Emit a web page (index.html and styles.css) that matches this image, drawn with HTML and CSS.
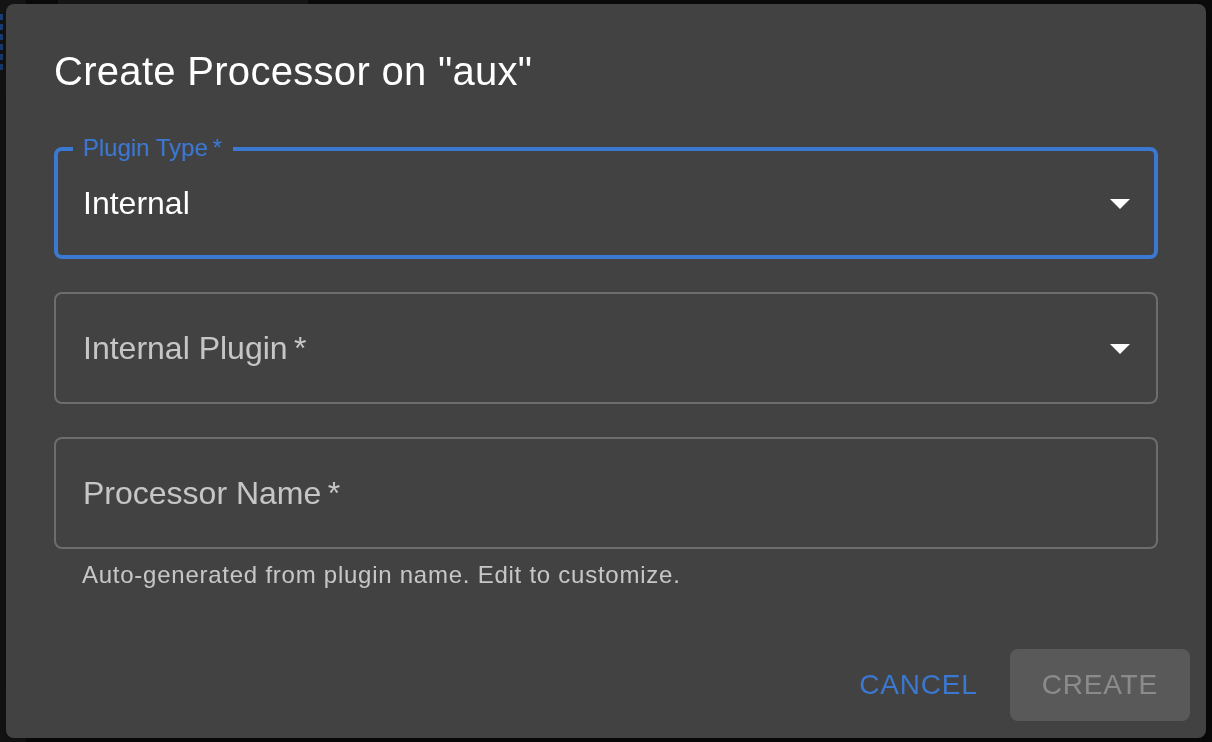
FILE: index.html
```html
<!DOCTYPE html>
<html lang="en">
<head>
<meta charset="utf-8">
<title>Create Processor</title>
<link rel="stylesheet" href="styles.css">
</head>
<body>
<div class="app">
  <div class="sidebar"><div class="dashes"></div></div>
  <div class="gutter"></div>
  <div class="main"><div class="topbar"></div></div>
</div>

<div class="dialog" role="dialog" aria-labelledby="dlg-title">
  <h2 class="dialog-title" id="dlg-title">Create Processor on "aux"</h2>
  <div class="dialog-content">
    <div class="field field-focused">
      <label class="field-label">Plugin Type<span class="req">&thinsp;*</span></label>
      <div class="field-value">Internal</div>
      <svg class="arrow" viewBox="0 0 24 24" aria-hidden="true"><path d="M7 10l5 5 5-5z"/></svg>
    </div>
    <div class="field">
      <div class="field-value placeholder">Internal Plugin<span class="req">&thinsp;*</span></div>
      <svg class="arrow" viewBox="0 0 24 24" aria-hidden="true"><path d="M7 10l5 5 5-5z"/></svg>
    </div>
    <div class="field-group">
      <div class="field">
        <div class="field-value placeholder">Processor Name<span class="req">&thinsp;*</span></div>
      </div>
      <p class="helper">Auto-generated from plugin name. Edit to customize.</p>
    </div>
  </div>
  <div class="dialog-actions">
    <button class="btn btn-text" type="button">Cancel</button>
    <button class="btn btn-contained" type="button" disabled>Create</button>
  </div>
</div>
</body>
</html>
```

FILE: styles.css
```css
html, body {
  margin: 0;
  height: 100%;
}

body {
  background: #0b0b0b;
  font-family: "Liberation Sans", Arial, Helvetica, sans-serif;
  overflow: hidden;
}

/* background app (dimmed by backdrop) */
.app {
  display: flex;
  height: 742px;
}

.sidebar {
  width: 26px;
  background: #161616;
  padding-top: 14px;
  box-sizing: border-box;
}

.dashes {
  width: 3px;
  height: 56px;
  background: repeating-linear-gradient(to bottom, #1c4480 0 6px, transparent 6px 10px);
}

.gutter {
  width: 32px;
  background: #0b0b0b;
}

.main {
  flex: 1;
  background: #0b0b0b;
}

.topbar {
  width: 250px;
  height: 4px;
  background: #181818;
}

/* dialog */
.dialog {
  position: fixed;
  top: 4px;
  left: 6px;
  width: 1200px;
  height: 734px;
  box-sizing: border-box;
  background: #424242;
  border-radius: 8px;
  display: flex;
  flex-direction: column;
  box-shadow: 0 22px 70px 8px rgba(0, 0, 0, 0.4);
}

.dialog-title {
  margin: 0;
  padding: 35px 48px 0;
  font-size: 40px;
  font-weight: 400;
  line-height: 64px;
  letter-spacing: 0.3px;
  color: #fff;
}

.dialog-content {
  padding: 44px 48px 0;
  display: flex;
  flex-direction: column;
  gap: 33px;
}

.field {
  position: relative;
  height: 112px;
  box-sizing: border-box;
  border: 2px solid rgba(255, 255, 255, 0.23);
  border-radius: 8px;
  display: flex;
  align-items: center;
  padding: 0 12px 0 27px;
}

.field-focused {
  border: 4px solid #3b78d1;
  padding: 0 10px 0 25px;
}

.field-label {
  position: absolute;
  top: -17px;
  left: 15px;
  padding: 0 11px 0 10px;
  background: #424242;
  font-size: 24px;
  line-height: 28px;
  color: #3b78d1;
}

.field-value {
  flex: 1;
  font-size: 32px;
  line-height: 46px;
  color: #fff;
}

.placeholder {
  color: rgba(255, 255, 255, 0.7);
}

.arrow {
  width: 48px;
  height: 48px;
  flex: none;
  fill: #fff;
}

.field-group {
  display: flex;
  flex-direction: column;
}

.helper {
  margin: 6px 0 0;
  padding: 0 28px;
  font-size: 24px;
  line-height: 40px;
  letter-spacing: 0.75px;
  color: rgba(255, 255, 255, 0.7);
}

.dialog-actions {
  margin-top: auto;
  padding: 16px 16px 17px;
  display: flex;
  justify-content: flex-end;
  align-items: center;
  gap: 16px;
}

.btn {
  height: 72px;
  box-sizing: border-box;
  font-family: "Liberation Sans", Arial, Helvetica, sans-serif;
  font-size: 28px;
  font-weight: 400;
  letter-spacing: 0.8px;
  text-transform: uppercase;
  border: 0;
  border-radius: 8px;
  background: none;
  padding: 0 16px;
  cursor: pointer;
}

.btn-text {
  color: #3b78d1;
}

.btn-contained {
  padding: 0 32px;
  background: rgba(255, 255, 255, 0.12);
  color: rgba(255, 255, 255, 0.3);
  cursor: default;
}
```
